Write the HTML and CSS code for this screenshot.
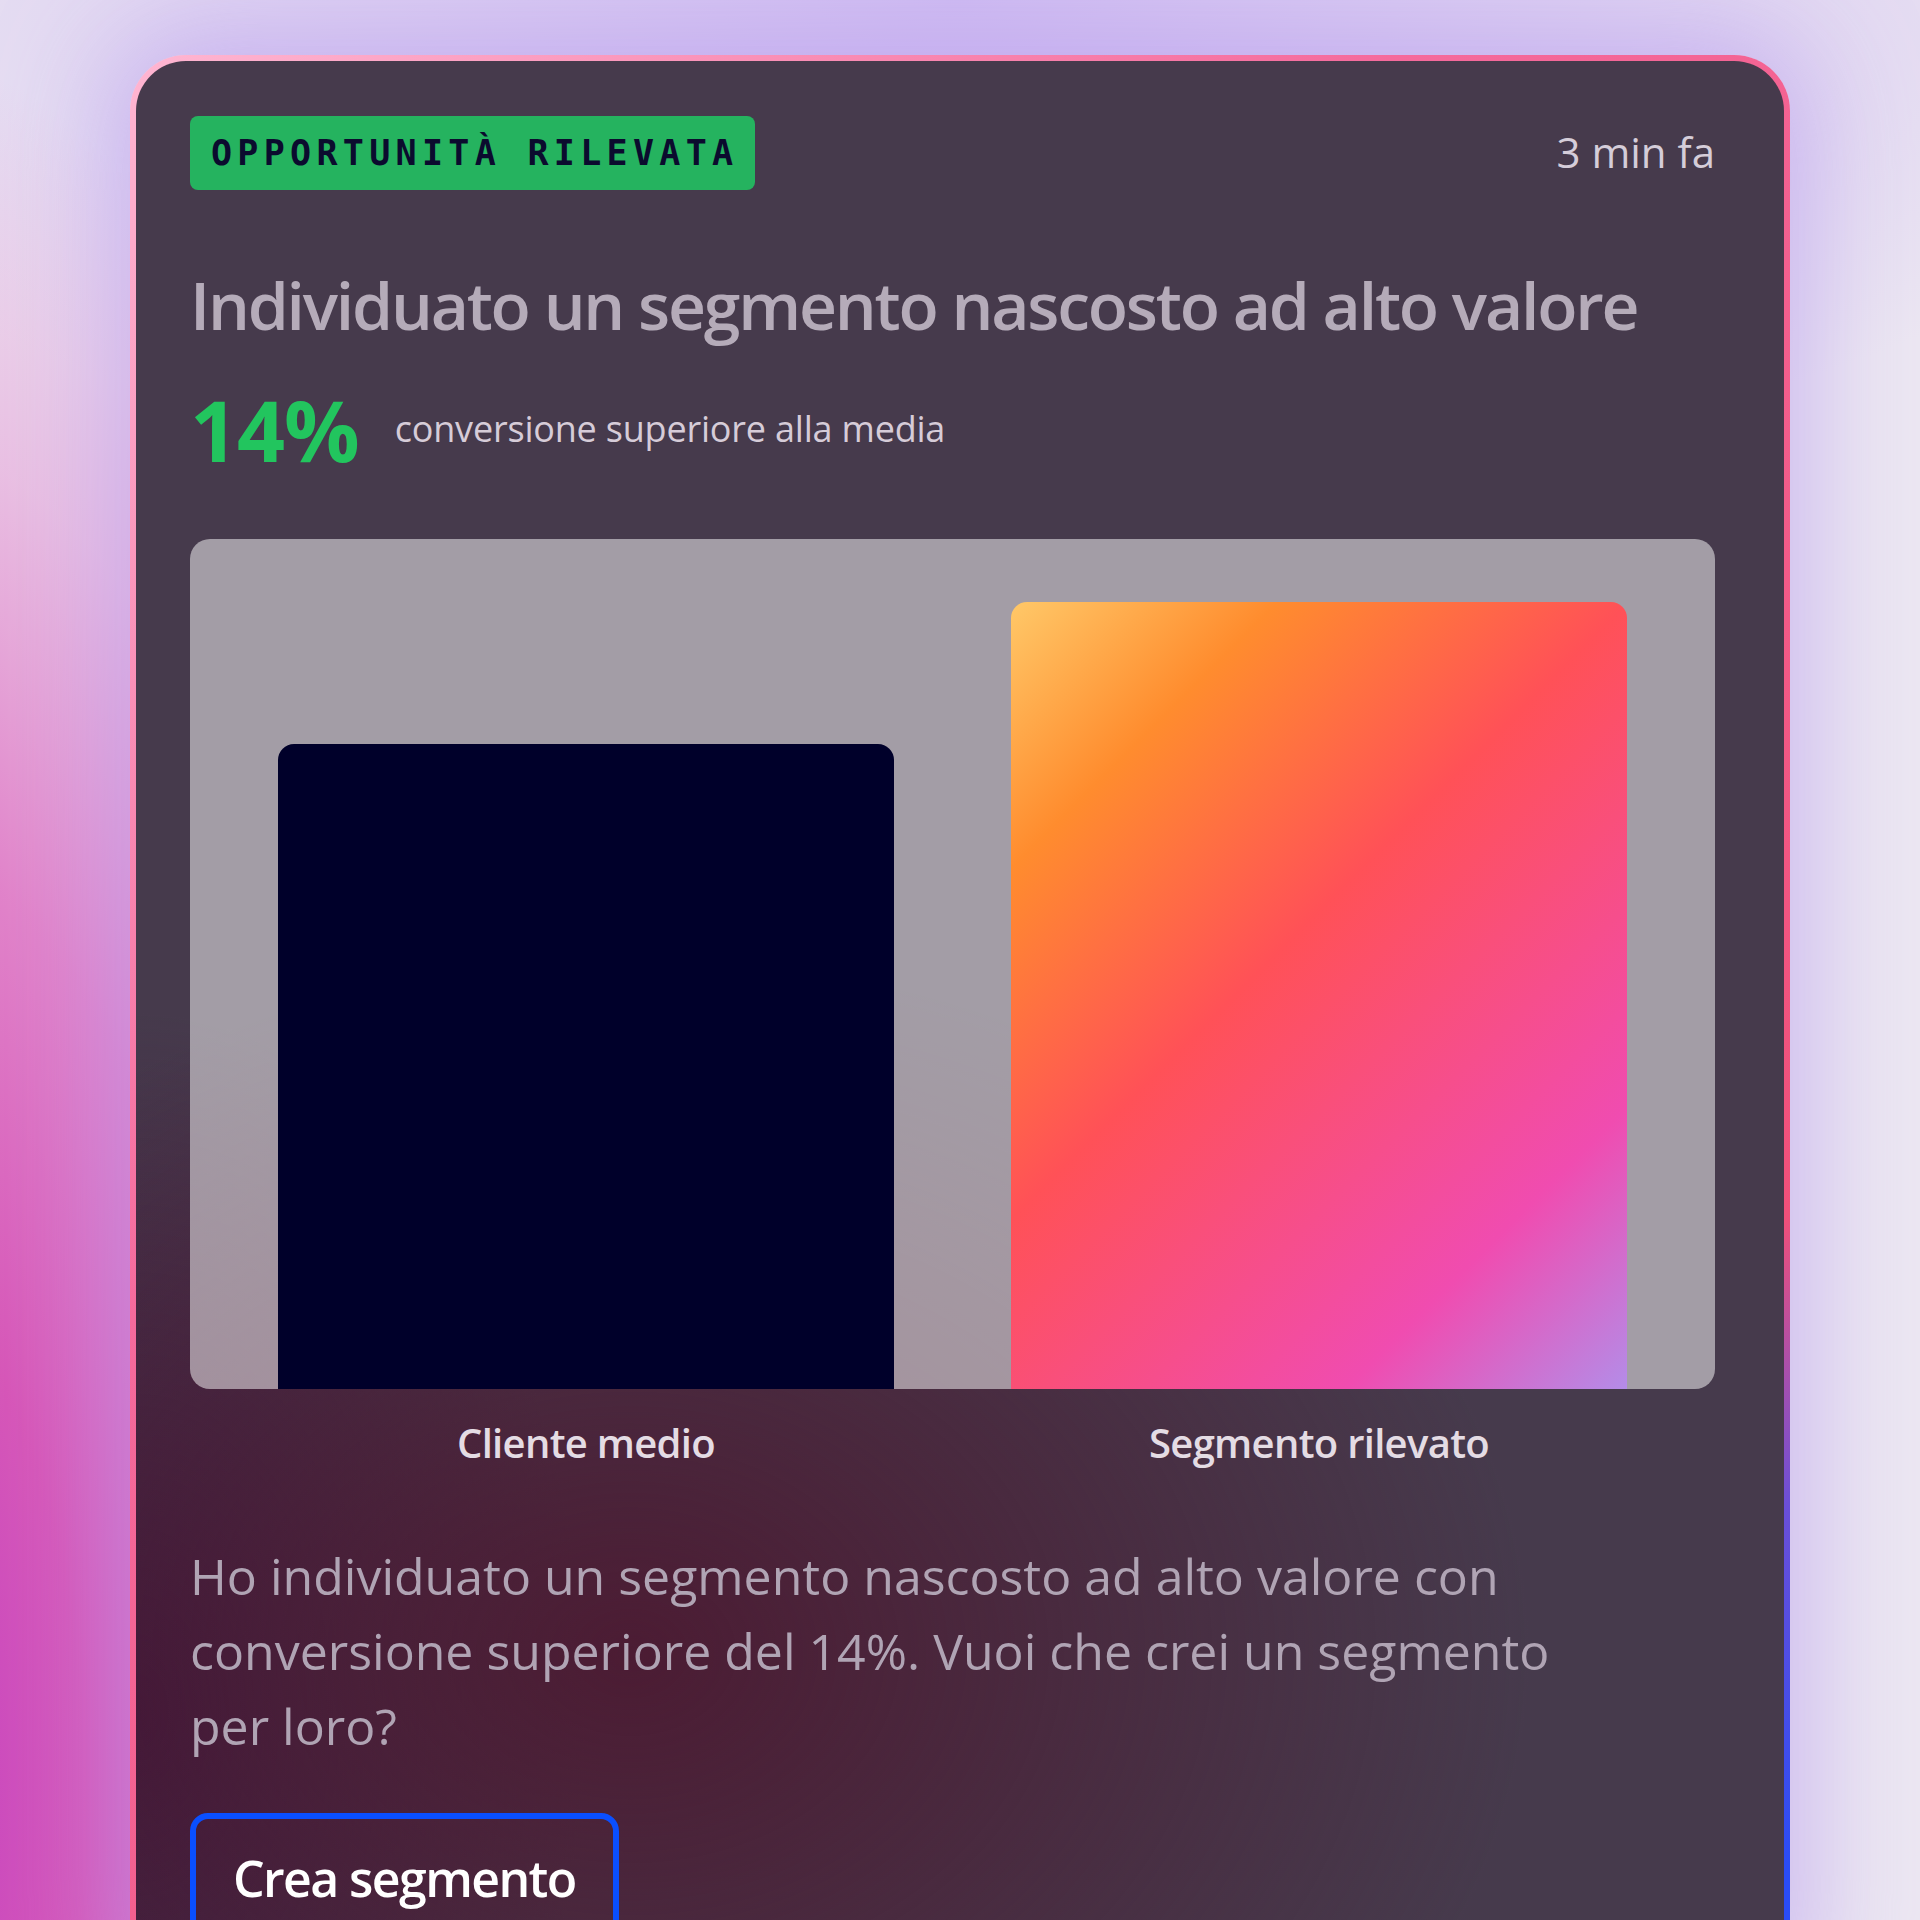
FILE: index.html
```html
<!DOCTYPE html>
<html lang="it">
<head>
<meta charset="utf-8">
<title>Opportunità rilevata</title>
<link rel="stylesheet" href="styles.css">
</head>
<body>
<main class="card">
  <header class="card-head">
    <span class="badge">OPPORTUNITÀ RILEVATA</span>
    <span class="time">3 min fa</span>
  </header>
  <h1 class="title">Individuato un segmento nascosto ad alto valore</h1>
  <div class="stat">
    <span class="stat-value">14%</span>
    <span class="stat-label">conversione superiore alla media</span>
  </div>
  <div class="chart">
    <div class="bar bar-avg" style="height: 75.9%"></div>
    <div class="bar bar-seg" style="height: 92.6%"></div>
  </div>
  <div class="chart-labels">
    <span class="chart-label">Cliente medio</span>
    <span class="chart-label">Segmento rilevato</span>
  </div>
  <p class="message">Ho individuato un segmento nascosto ad alto valore con conversione superiore del 14%. Vuoi che crei un segmento per loro?</p>
  <button class="action" type="button">Crea segmento</button>
</main>
</body>
</html>
```
FILE: styles.css
```css
* { box-sizing: border-box; }

html, body {
  margin: 0;
  min-height: 100%;
}

body {
  padding-top: 55px;
  font-family: "Open Sans", "Noto Sans", sans-serif;
  overflow: hidden;
  background:
    radial-gradient(ellipse 680px 1750px at -120px 1800px, rgba(192, 62, 196, 1) 0%, rgba(214, 82, 182, 0.97) 30%, rgba(224, 118, 196, 0.88) 55%, rgba(232, 166, 216, 0.6) 78%, rgba(236, 210, 236, 0) 100%),
    radial-gradient(ellipse 1300px 500px at 50% 0%, rgba(206, 186, 242, 0.9) 0%, rgba(214, 198, 242, 0) 100%),
    #ece7f2;
}

.card {
  width: 1660px;
  margin: 0 auto;
  border: 6px solid transparent;
  border-radius: 56px;
  padding: 55px 69px 60px 54px;
  background:
    radial-gradient(ellipse 900px 700px at 30% 82%, rgba(76, 26, 50, 0.95) 0%, rgba(76, 26, 50, 0) 100%) padding-box,
    radial-gradient(ellipse 450px 700px at 0% 85%, rgba(62, 20, 58, 0.9) 0%, rgba(62, 20, 58, 0) 100%) padding-box,
    linear-gradient(#463a4c, #463a4c) padding-box,
    linear-gradient(135deg, #ffb6d2 0%, #f56a9c 35%, #f0507a 78%, #6a4fd8 86%, #2a4cf5 96%) border-box;
  box-shadow: 0 0 110px 20px rgba(176, 146, 236, 0.55);
}

.card-head {
  display: flex;
  justify-content: space-between;
  align-items: center;
}

.badge {
  display: flex;
  align-items: center;
  height: 74px;
  padding: 0 17px 0 21px;
  background: #25b35f;
  border-radius: 8px;
  color: #0b0b2e;
  font-family: "DejaVu Sans Mono", "Liberation Mono", monospace;
  font-weight: 700;
  font-size: 35px;
  letter-spacing: 5.3px;
}

.time {
  color: #d5cdd9;
  font-size: 42px;
  font-weight: 400;
  margin-top: -4px;
}

.title {
  margin: 75px 0 0;
  color: #b5abb9;
  font-size: 66px;
  font-weight: 600;
  letter-spacing: -2.2px;
  line-height: 1.2;
}

.stat {
  display: flex;
  align-items: center;
  gap: 36px;
  margin-top: 44px;
}

.stat-value {
  color: #22c55e;
  font-size: 84px;
  font-weight: 700;
  letter-spacing: -1px;
  line-height: 1;
}

.stat-label {
  color: #d6ccd8;
  font-size: 36px;
  letter-spacing: -0.2px;
  margin-top: -3px;
}

.chart {
  display: flex;
  align-items: flex-end;
  gap: 117px;
  height: 850px;
  margin-top: 67px;
  padding: 0 88px;
  background: rgba(255, 255, 255, 0.5);
  border-radius: 20px;
}

.bar {
  flex: 1;
  border-radius: 16px 16px 0 0;
}

.bar-avg {
  background: #00002a;
}

.bar-seg {
  background: linear-gradient(135deg, #ffc868 0%, #ff8c2e 19%, #ff5157 44%, #f04cb0 80%, #b48ce8 100%);
}

.chart-labels {
  display: flex;
  gap: 117px;
  margin-top: 30px;
  padding: 0 88px;
}

.chart-label {
  flex: 1;
  text-align: center;
  color: #e4dce4;
  font-size: 40px;
  font-weight: 600;
  letter-spacing: -0.7px;
  line-height: 1.2;
}

.message {
  max-width: 1420px;
  margin: 72px 0 0;
  color: #b0a4b4;
  font-size: 50px;
  line-height: 75px;
}

.action {
  display: block;
  margin-top: 49px;
  padding: 29px 37px;
  background: transparent;
  border: 6px solid #0a4fff;
  border-radius: 18px;
  color: #ffffff;
  font-family: inherit;
  font-size: 50px;
  font-weight: 600;
  letter-spacing: -1.6px;
  line-height: 1.2;
}
```
